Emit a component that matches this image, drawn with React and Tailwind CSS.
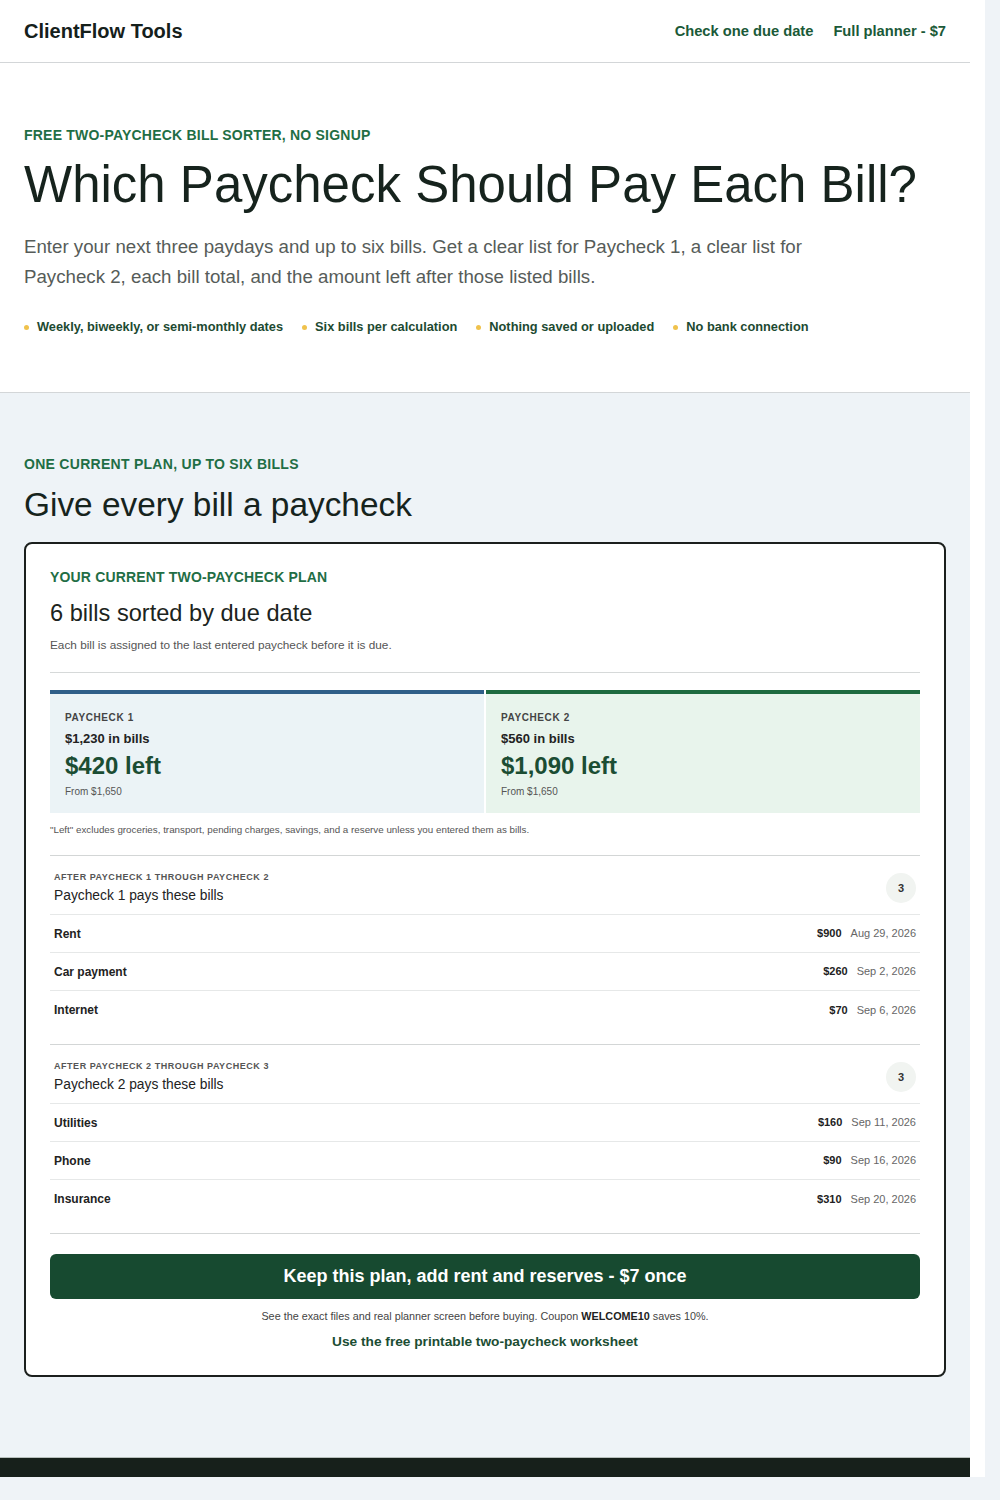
import React from "react";

const font = { fontFamily: '"Liberation Sans", Arial, sans-serif' };

function Row({ name, amount, date, last }) {
  return (
    <div className={`flex items-center justify-between h-[38px] px-1 ${last ? "" : "border-b border-[#e6e8e8]"}`}>
      <span className="text-[12px] font-bold text-[#222]">{name}</span>
      <span className="flex items-center gap-[9px] text-[11px]">
        <span className="font-bold text-[#222]">{amount}</span>
        <span className="text-[#666]">{date}</span>
      </span>
    </div>
  );
}

function Group({ label, title, rows }) {
  return (
    <div className="border-t border-[#d3d6d6] pb-[15px]">
      <div className="flex items-center justify-between px-1 pt-[14px] pb-[8px] border-b border-[#e6e8e8]">
        <div>
          <div className="text-[9px] font-bold tracking-[0.06em] uppercase text-[#555] leading-[14px]">{label}</div>
          <div className="text-[13.8px] text-[#222] leading-[20px] mt-[2px]">{title}</div>
        </div>
        <div className="w-[30px] h-[30px] rounded-full bg-[#f1f4f1] flex items-center justify-center text-[11px] font-bold text-[#333]">
          3
        </div>
      </div>
      {rows.map((r, i) => (
        <Row key={r.name} {...r} last={i === rows.length - 1} />
      ))}
    </div>
  );
}

function Pay({ label, bills, left, bar, bg }) {
  return (
    <div className={`${bg} border-t-4 ${bar} px-[15px] pt-[17px] pb-[14px]`}>
      <div className="text-[10px] font-bold tracking-[0.06em] uppercase text-[#444] leading-[14px]">{label}</div>
      <div className="text-[13px] font-bold text-[#222] leading-[18px] mt-[5px]">{bills}</div>
      <div className="text-[24px] font-bold text-[#1b4d33] leading-[28px] mt-[4px]">{left}</div>
      <div className="text-[10px] text-[#555] leading-[14px] mt-[5px]">From $1,650</div>
    </div>
  );
}

export default function App() {
  const bullets = [
    "Weekly, biweekly, or semi-monthly dates",
    "Six bills per calculation",
    "Nothing saved or uploaded",
    "No bank connection",
  ];
  return (
    <div className="bg-[#eff3f7] h-[1500px]" style={font}>
      <div className="w-[985px] h-[1477px] overflow-y-scroll bg-white">
        <div className="w-[970px]">
          <header className="h-[63px] flex items-center justify-between px-6 border-b border-[#d3d6d8] bg-white">
            <div className="text-[20px] font-bold text-[#15201b]">ClientFlow Tools</div>
            <nav className="flex items-center gap-5 text-[14.7px] font-bold text-[#1b5a38]">
              <span>Check one due date</span>
              <span>Full planner - $7</span>
            </nav>
          </header>

          <section className="bg-white px-6 pt-[62px] pb-[55px] border-b border-[#d3d6d8]">
            <div className="text-[14px] font-bold uppercase tracking-[0.015em] text-[#1f6e45] leading-[20px]">
              Free two-paycheck bill sorter, no signup
            </div>
            <h1 className="text-[51px] leading-[60px] text-[#16231d] mt-[10px]">
              Which Paycheck Should Pay Each Bill?
            </h1>
            <p className="text-[18.7px] leading-[30px] text-[#565c59] mt-[17px] max-w-[820px]">
              Enter your next three paydays and up to six bills. Get a clear list for Paycheck 1, a clear list for
              Paycheck 2, each bill total, and the amount left after those listed bills.
            </p>
            <ul className="flex items-center gap-[19px] mt-[25px]">
              {bullets.map((b) => (
                <li key={b} className="flex items-center gap-[8px] text-[12.8px] font-bold text-[#1d4a31] leading-[20px]">
                  <span className="w-[5px] h-[5px] rounded-full bg-[#f0c24c]" />
                  {b}
                </li>
              ))}
            </ul>
          </section>

          <section className="bg-[#eef3f7] px-6 pt-[61px] pb-[80px]">
            <div className="text-[14px] font-bold uppercase tracking-[0.02em] text-[#1f6e45] leading-[20px]">
              One current plan, up to six bills
            </div>
            <h2 className="text-[33.4px] leading-[40px] text-[#16231d] mt-[11px]">Give every bill a paycheck</h2>

            <div className="mt-[17px] bg-white border-2 border-[#1b1f1d] rounded-[8px] px-[24px] pt-[23px] pb-[24px]">
              <div className="text-[14px] font-bold uppercase tracking-[0.012em] text-[#1f6e45] leading-[20px]">
                Your current two-paycheck plan
              </div>
              <div className="text-[23.6px] text-[#1c2420] leading-[30px] mt-[11px]">6 bills sorted by due date</div>
              <div className="text-[11.8px] text-[#555] leading-[16px] mt-[9px]">
                Each bill is assigned to the last entered paycheck before it is due.
              </div>
              <div className="border-t border-[#d6d9d9] mt-[19px]" />

              <div className="grid grid-cols-2 gap-[2px] mt-[17px]">
                <Pay label="Paycheck 1" bills="$1,230 in bills" left="$420 left" bar="border-[#2f5e88]" bg="bg-[#ebf3f6]" />
                <Pay label="Paycheck 2" bills="$560 in bills" left="$1,090 left" bar="border-[#1e6a40]" bg="bg-[#e8f4ec]" />
              </div>
              <div className="text-[9.8px] text-[#555] leading-[14px] mt-[10px]">
                "Left" excludes groceries, transport, pending charges, savings, and a reserve unless you entered them as bills.
              </div>

              <div className="mt-[18px]">
                <Group
                  label="After paycheck 1 through paycheck 2"
                  title="Paycheck 1 pays these bills"
                  rows={[
                    { name: "Rent", amount: "$900", date: "Aug 29, 2026" },
                    { name: "Car payment", amount: "$260", date: "Sep 2, 2026" },
                    { name: "Internet", amount: "$70", date: "Sep 6, 2026" },
                  ]}
                />
                <Group
                  label="After paycheck 2 through paycheck 3"
                  title="Paycheck 2 pays these bills"
                  rows={[
                    { name: "Utilities", amount: "$160", date: "Sep 11, 2026" },
                    { name: "Phone", amount: "$90", date: "Sep 16, 2026" },
                    { name: "Insurance", amount: "$310", date: "Sep 20, 2026" },
                  ]}
                />
                <div className="border-t border-[#d3d6d6]" />
              </div>

              <button className="mt-[20px] w-full h-[45px] rounded-[6px] bg-[#174a30] text-white text-[18px] font-bold">
                Keep this plan, add rent and reserves - $7 once
              </button>
              <div className="text-center text-[10.8px] text-[#444] leading-[14px] mt-[10px]">
                See the exact files and real planner screen before buying. Coupon <span className="font-bold text-[#222]">WELCOME10</span> saves 10%.
              </div>
              <div className="text-center text-[13.7px] font-bold text-[#1b4d33] leading-[18px] mt-[10px]">
                Use the free printable two-paycheck worksheet
              </div>
            </div>
          </section>

          <footer className="bg-[#17201b] border-t border-[#b8c0bd] h-[3760px]" />
        </div>
      </div>
    </div>
  );
}
